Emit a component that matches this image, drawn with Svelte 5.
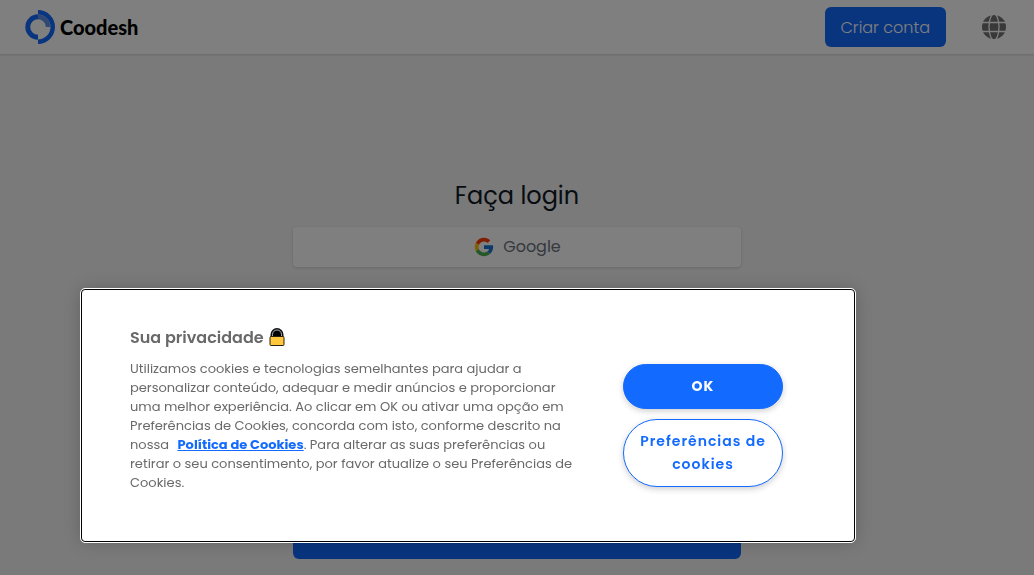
<script>
  const googlePaths = [
    { fill: '#ff3d00', d: 'M6.3 14.7l6.6 4.8C14.7 15.1 19 12 24 12c3.1 0 5.8 1.2 8 3l5.7-5.7C34 6.1 29.3 4 24 4 16.3 4 9.7 8.3 6.3 14.7z' },
    { fill: '#ffc107', d: 'M6.3 14.7A20 20 0 0 0 6.3 33.5l6.5-5.1A12 12 0 0 1 12.9 19.5z' },
    { fill: '#4caf50', d: 'M24 44c5.2 0 9.9-2 13.4-5.2l-6.2-5.2A12 12 0 0 1 12.7 28.2l-6.5 5C9.5 39.6 16.2 44 24 44z' },
    { fill: '#1976d2', d: 'M43.6 20.1H24v8h11.3a12 12 0 0 1-4.1 5.5l6.2 5.2C37 39.2 44 34 44 24c0-1.3-.1-2.6-.4-3.9z' }
  ];
</script>

<div class="page">
  <header>
    <a class="brand" href="/" aria-label="Coodesh">
      <svg width="30" height="34" viewBox="0 0 30 34" aria-hidden="true">
        <path fill="#126aff" d="M13 4.3A12.7 12.7 0 0 0 13 29.700V24.800A7.800 7.800 0 0 1 13 9.200z" />
        <path fill="#126aff" d="M13 0A17 17 0 0 1 13 34V29.500A12.500 12.500 0 0 0 13 4.500z" />
        <path fill="#5f91e8" d="M13 4.500A12.500 12.500 0 0 1 25.500 17H20.800A7.800 7.800 0 0 0 13 9.200z" />
      </svg>
      <span>Coodesh</span>
    </a>
    <nav>
      <button class="create" type="button">Criar conta</button>
      <button class="language" type="button" aria-label="Idioma">
        <svg width="24" height="24" viewBox="0 0 24 24" aria-hidden="true">
          <circle cx="12" cy="12" r="12" fill="#737373" />
          <g fill="none" stroke="#fff" stroke-width="1.300">
            <ellipse cx="12" cy="12" rx="5" ry="13" />
            <path d="M0 7.500H24M0 16.500H24" />
          </g>
        </svg>
      </button>
    </nav>
  </header>

  <main>
    <h1>Faça login</h1>
    <button class="google" type="button">
      <svg width="22" height="22" viewBox="0 0 48 48" aria-hidden="true">
        {#each googlePaths as path}
          <path fill={path.fill} d={path.d} />
        {/each}
      </svg>
      <span>Google</span>
    </button>
    <button class="submit" type="submit" aria-label="Entrar"></button>
  </main>
</div>

<div class="backdrop"></div>

<div class="consent" role="dialog" aria-modal="true" aria-labelledby="consent-title">
  <div class="message">
    <h2 id="consent-title">
      Sua privacidade
      <svg width="16" height="20" viewBox="0 0 16 20" aria-hidden="true">
        <path d="M2.500 9V6.500a5.500 5.500 0 0 1 11 0V9" fill="#000" stroke="#111" stroke-width="2" />
        <path d="M3.500 9V6.500a4.500 4.500 0 0 1 9 0V9" fill="none" stroke="#a8b0b4" stroke-width="1" />
        <rect x="1" y="8.500" width="14" height="9" rx="1" fill="#ffc83d" stroke="#2b2110" />
      </svg>
    </h2>
    <p>
      Utilizamos cookies e tecnologias semelhantes para ajudar a<br />
      personalizar conteúdo, adequar e medir anúncios e proporcionar<br />
      uma melhor experiência. Ao clicar em OK ou ativar uma opção em<br />
      Preferências de Cookies, concorda com isto, conforme descrito na<br />
      nossa <a href="/cookies">Política de Cookies</a>. Para alterar as suas preferências ou<br />
      retirar o seu consentimento, por favor atualize o seu Preferências de<br />
      Cookies.
    </p>
  </div>
  <div class="actions">
    <button class="accept" type="button">OK</button>
    <button class="settings" type="button">Preferências de cookies</button>
  </div>
</div>

<style>
  :global(body) {
    margin: 0;
    background: #f4f4f4;
    font-family: Poppins, Inter, sans-serif;
  }

  button {
    font-family: inherit;
    margin: 0;
    padding: 0;
    border: 0;
    cursor: pointer;
  }

  .page {
    min-height: 100vh;
    background: #f4f4f4;
  }

  header {
    display: flex;
    align-items: center;
    justify-content: space-between;
    height: 54px;
    padding: 0 28px 0 25px;
    box-sizing: border-box;
    background: #fff;
    box-shadow: 0 1px 2px rgba(0, 0, 0, 0.15);
  }

  .brand {
    display: flex;
    align-items: center;
    gap: 5px;
    color: #000;
    font: 900 20px/24px Lato, sans-serif;
    text-decoration: none;
  }

  nav {
    display: flex;
    align-items: center;
    gap: 36px;
  }

  .create {
    height: 40px;
    padding: 0 16px;
    border-radius: 6px;
    background: #126aff;
    color: #fff;
    font-size: 16px;
    font-weight: 300;
  }

  .language {
    display: flex;
    background: none;
  }

  main {
    display: flex;
    flex-direction: column;
    max-width: 448px;
    margin: 0 auto;
    padding: 126px 16px 16px;
  }

  h1 {
    margin: 0 0 15px;
    color: #111827;
    font-size: 24px;
    font-weight: 400;
    line-height: 32px;
    text-align: center;
  }

  .google {
    display: flex;
    align-items: center;
    justify-content: center;
    gap: 8px;
    height: 40px;
    border-radius: 4px;
    background: #fff;
    box-shadow: 0 1px 3px rgba(0, 0, 0, 0.15);
    color: #6b7280;
    font-size: 16px;
    line-height: 24px;
  }

  .submit {
    height: 40px;
    margin-top: 252px;
    border-radius: 6px;
    background: #126aff;
  }

  .backdrop {
    position: fixed;
    inset: 0;
    background: rgba(0, 0, 0, 0.5);
  }

  .consent {
    position: fixed;
    left: 81px;
    bottom: 33px;
    display: flex;
    align-items: flex-start;
    gap: 54px;
    width: 75%;
    max-width: 774px;
    padding: 36px 71px 49px 48px;
    box-sizing: border-box;
    border: 1px solid #000;
    border-radius: 4px;
    outline: 1px solid #fff;
    background: #fff;
    box-shadow: 0 0 18px rgba(0, 0, 0, 0.2);
    color: #696969;
  }

  .message {
    flex: 1;
    min-width: 0;
  }

  h2 {
    display: flex;
    align-items: center;
    gap: 5px;
    margin: 0 0 9px;
    font-size: 16px;
    font-weight: 600;
    line-height: 24px;
  }

  p {
    margin: 0;
    font-size: 13px;
    line-height: 19px;
    white-space: nowrap;
  }

  p a {
    margin-left: 5px;
    color: #126aff;
    font-weight: 700;
    text-decoration: underline;
  }

  .actions {
    display: flex;
    flex: 0 0 160px;
    flex-direction: column;
    gap: 10px;
    padding-top: 38px;
  }

  .actions button {
    padding: 10px 12px;
    border: 1px solid #126aff;
    border-radius: 40px;
    box-shadow: 0 2px 6px rgba(0, 0, 0, 0.2);
    font-size: 14px;
    font-weight: 600;
    letter-spacing: 1px;
    line-height: 23px;
  }

  .actions .accept {
    background: #126aff;
    color: #fff;
    font-weight: 700;
  }

  .actions .settings {
    background: #fff;
    color: #126aff;
  }
</style>
